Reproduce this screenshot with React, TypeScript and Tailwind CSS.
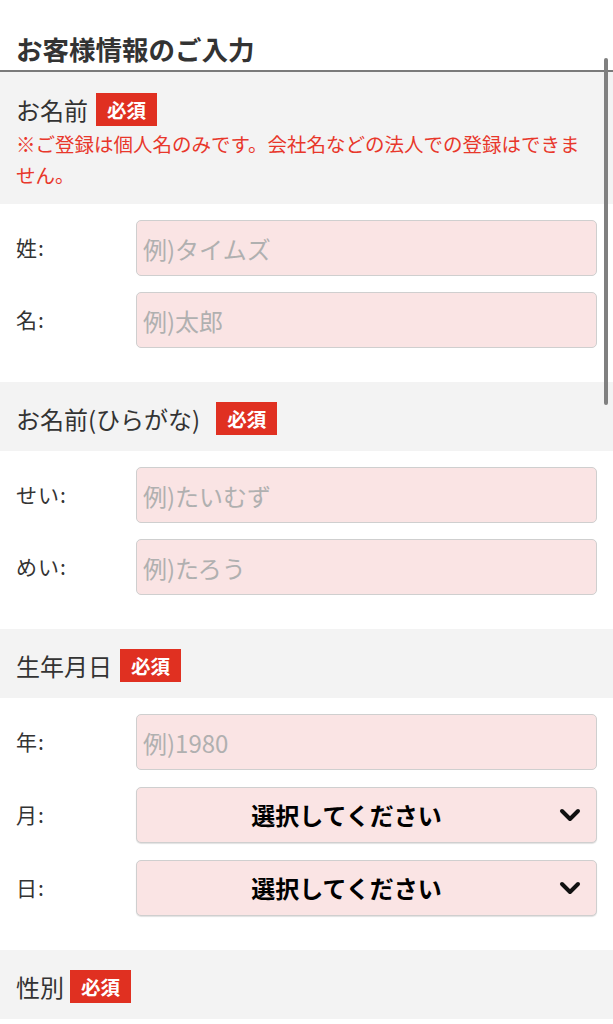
import type { ReactNode } from "react";

const FONT = { fontFamily: '"Noto Sans CJK JP", "Noto Sans", sans-serif' };

function Badge() {
  return (
    <span className="inline-flex h-[33px] items-center bg-[#e03021] px-[11px] text-[19.5px] font-bold leading-none text-white">
      必須
    </span>
  );
}

function SectionHeader({
  label,
  gap = "ml-2",
  pad = "pt-5 pb-4",
  children,
}: {
  label: string;
  gap?: string;
  pad?: string;
  children?: ReactNode;
}) {
  return (
    <div className={`bg-[#f3f3f3] px-4 ${pad}`}>
      <div className="flex items-center">
        <span className="text-[24px] leading-none text-[#333]">{label}</span>
        <span className={gap}>
          <Badge />
        </span>
      </div>
      {children}
    </div>
  );
}

function Row({ label, children }: { label: string; children: ReactNode }) {
  return (
    <div className="flex items-center">
      <div className="w-[120px] shrink-0 text-[21px] tracking-[1px] text-[#333]">{label}</div>
      <div className="min-w-0 flex-1">{children}</div>
    </div>
  );
}

function TextInput({ placeholder }: { placeholder: string }) {
  return (
    <input
      type="text"
      placeholder={placeholder}
      className="h-[56px] w-full rounded-[5px] border border-[#cfcfcf] bg-[#fae4e4] px-[6px] text-[24px] text-[#333] outline-none placeholder:text-[#b0b0b0]"
      style={FONT}
    />
  );
}

function SelectBox() {
  return (
    <div className="relative flex h-[56px] w-full items-center rounded-[5px] border border-[#cfcfcf] bg-[#fae4e4] shadow-[0_1px_1px_rgba(0,0,0,0.12)]">
      <span className="flex-1 pr-[40px] text-center text-[24px] font-bold text-black">選択してください</span>
      <svg
        className="absolute right-[15px] top-1/2 -translate-y-1/2"
        width="22"
        height="14"
        viewBox="0 0 22 14"
        fill="none"
      >
        <path d="M3 3l8 8 8-8" stroke="#111" strokeWidth="4" strokeLinecap="round" strokeLinejoin="round" />
      </svg>
    </div>
  );
}

function Fields({ gap = "gap-4", children }: { gap?: string; children: ReactNode }) {
  return <div className={`flex flex-col ${gap} bg-white pt-4 pb-[34px] pl-4 pr-4`}>{children}</div>;
}

export default function App() {
  return (
    <div className="relative min-h-screen bg-white" style={FONT}>
      <h1 className="border-b-2 border-[#7a7a7a] px-4 pt-[33px] pb-[5px] text-[26.5px] font-bold leading-[32px] text-[#333]">
        お客様情報のご入力
      </h1>

      <SectionHeader label="お名前" pad="pt-[21px] pb-[14px]">
        <p className="pt-[2px] text-[19.5px] leading-[31px] text-[#e8372b]">
          ※ご登録は個人名のみです。会社名などの法人での登録はできません。
        </p>
      </SectionHeader>
      <Fields>
        <Row label="姓:">
          <TextInput placeholder="例)タイムズ" />
        </Row>
        <Row label="名:">
          <TextInput placeholder="例)太郎" />
        </Row>
      </Fields>

      <SectionHeader label="お名前(ひらがな)" gap="ml-4" />
      <Fields>
        <Row label="せい:">
          <TextInput placeholder="例)たいむず" />
        </Row>
        <Row label="めい:">
          <TextInput placeholder="例)たろう" />
        </Row>
      </Fields>

      <SectionHeader label="生年月日" />
      <Fields gap="gap-[17px]">
        <Row label="年:">
          <TextInput placeholder="例)1980" />
        </Row>
        <Row label="月:">
          <SelectBox />
        </Row>
        <Row label="日:">
          <SelectBox />
        </Row>
      </Fields>

      <SectionHeader label="性別" gap="ml-[6px]" />
      <div className="h-[120px] bg-white" />

      {/* overlay scrollbar */}
      <div className="absolute left-[604px] top-[58px] h-[347px] w-[4px] rounded-full bg-[#808080]" />
    </div>
  );
}
